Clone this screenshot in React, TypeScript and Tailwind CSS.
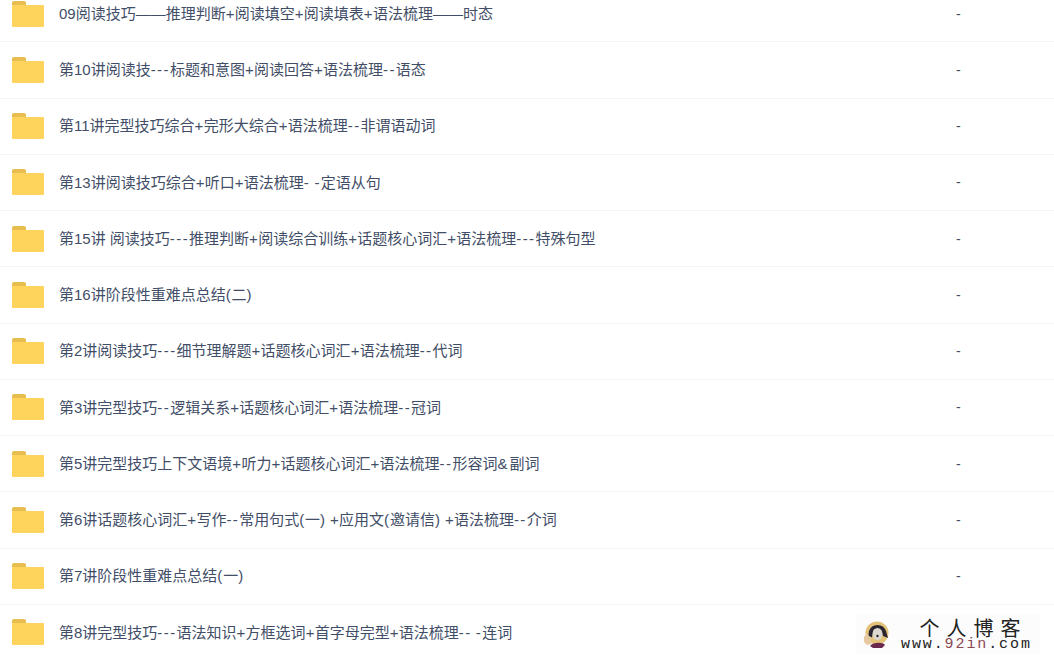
const rows = [
  "09阅读技巧——推理判断+阅读填空+阅读填表+语法梳理——时态",
  "第10讲阅读技---标题和意图+阅读回答+语法梳理--语态",
  "第11讲完型技巧综合+完形大综合+语法梳理--非谓语动词",
  "第13讲阅读技巧综合+听口+语法梳理- -定语从句",
  "第15讲 阅读技巧---推理判断+阅读综合训练+话题核心词汇+语法梳理---特殊句型",
  "第16讲阶段性重难点总结(二)",
  "第2讲阅读技巧---细节理解题+话题核心词汇+语法梳理--代词",
  "第3讲完型技巧--逻辑关系+话题核心词汇+语法梳理--冠词",
  "第5讲完型技巧上下文语境+听力+话题核心词汇+语法梳理--形容词&副词",
  "第6讲话题核心词汇+写作--常用句式(一) +应用文(邀请信) +语法梳理--介词",
  "第7讲阶段性重难点总结(一)",
  "第8讲完型技巧---语法知识+方框选词+首字母完型+语法梳理-- -连词",
];

const FolderIcon = () => (
  <svg width="32" height="26" viewBox="0 0 32 26" className="shrink-0">
    <path d="M0 2a2 2 0 0 1 2-2h10a2 2 0 0 1 2 2v2H0z" fill="#e8bd4f" />
    <path d="M0 5a1 1 0 0 1 1-1h30a1 1 0 0 1 1 1v20a1 1 0 0 1-1 1H1a1 1 0 0 1-1-1z" fill="#ffd45c" />
  </svg>
);

// latin marks are wider in the original font, so space them out a little
const RowName = ({ name }: { name: string }) => (
  <>
    {name.split(/(-+|[()]|\+|&)/).map((part, i) => {
      if (part.startsWith("-")) return <span key={i} className="tracking-[1.4px]">{part}</span>;
      if (part === "(" || part === ")") return <span key={i} className="tracking-[0.8px]">{part}</span>;
      if (part === "+") return <span key={i} className="tracking-[0.3px]">{part}</span>;
      if (part === "&") return <span key={i} className="tracking-[2px]">{part}</span>;
      return part;
    })}
  </>
);

const Watermark = () => (
  <div className="absolute right-[14px] bottom-[2px] w-[184px] h-[40px] bg-[#fdfcfc] flex items-center pl-[7px] gap-[12px]">
    <svg width="26" height="28" viewBox="0 0 26 28" className="shrink-0">
      <circle cx="14" cy="13" r="11.5" fill="#e3c27a" />
      <path d="M6 11a9 9 0 0 1 17 0l2 7-5-2-2-6-7-1-2 8-4 2z" fill="#2b2530" />
      <ellipse cx="14.5" cy="14" rx="5" ry="6" fill="#dcd8d0" />
      <circle cx="14.5" cy="16" r="1.2" fill="#2b2530" />
      <path d="M7 26c3-4 13-4 15-1l-3 3h-9z" fill="#6b2a4d" />
      <path d="M1 17l3-4 2 3 2 1v7l-4 1-3-3z" fill="#e6c9a0" />
    </svg>
    <div className="flex flex-col items-center text-[#222]">
      <span className="ml-[14px] mt-[1px] text-[20px] leading-[20px] tracking-[7px] font-['Noto_Sans_CJK_SC',sans-serif]">个人博客</span>
      <span className="text-[15px] leading-[14px] tracking-[1.9px] font-['Liberation_Mono',monospace]">
        www.<span className="text-[#8a4a52]">92in</span>.com
      </span>
    </div>
  </div>
);

export default function App() {
  return (
    <div className="relative w-[1054px] h-[656px] overflow-hidden bg-white">
      <div className="-mt-[14px]">
        {rows.map((name, i) => (
          <div
            key={name}
            className="h-[56.25px] flex items-center border-b border-[#f4f5f9] pl-[12px]"
          >
            <FolderIcon />
            <span className="ml-[15px] pt-[1px] flex-1 text-[15px] text-[#424e67] font-['Liberation_Sans','Noto_Sans_CJK_SC',sans-serif] whitespace-nowrap">
              <RowName name={name} />
            </span>
            {i < rows.length - 1 && (
              <span className="w-[98px] pt-[1px] text-[14px] text-[#424e67] font-['Liberation_Sans',sans-serif]">-</span>
            )}
          </div>
        ))}
      </div>
      <Watermark />
    </div>
  );
}
